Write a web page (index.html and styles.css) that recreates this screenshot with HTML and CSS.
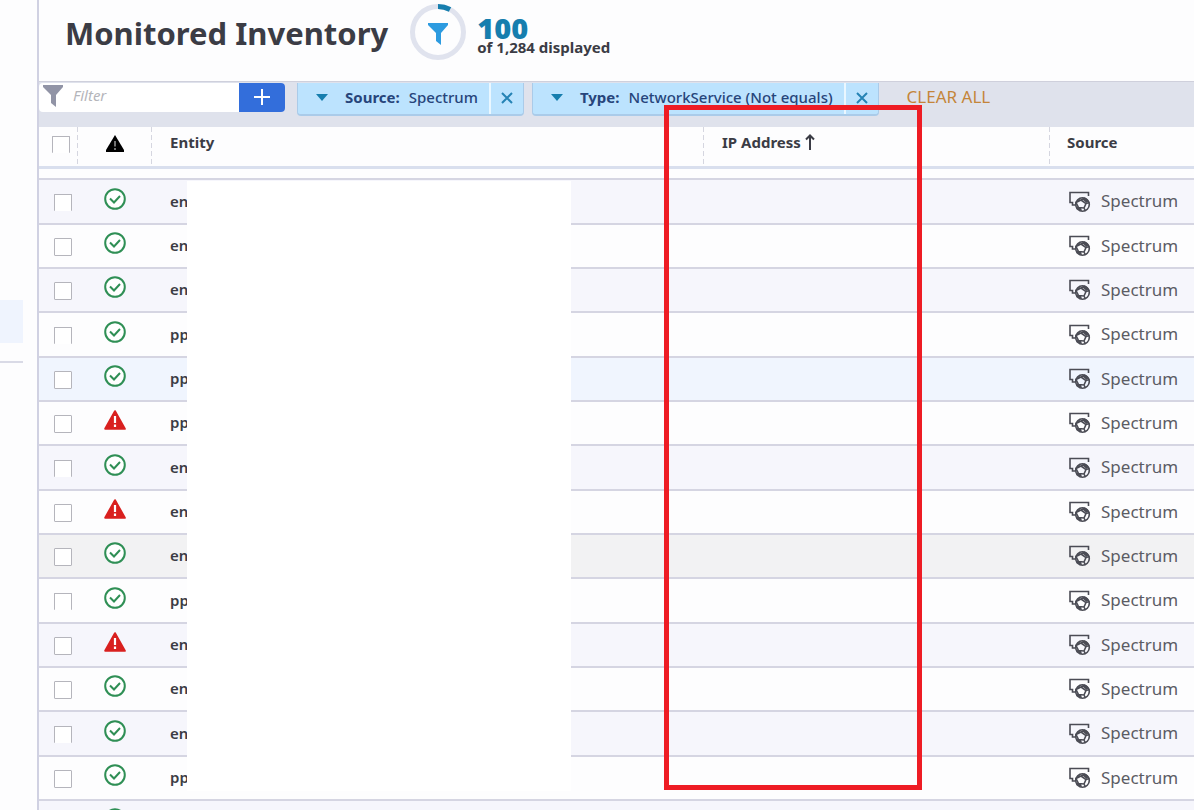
FILE: index.html
```html
<!DOCTYPE html>
<html lang="en">
<head>
    <meta charset="UTF-8">
    <meta name="viewport" content="width=device-width, initial-scale=1.0">
    <title>Monitored Inventory</title>
    <link rel="stylesheet" href="styles.css">
</head>
<body>

    <svg class="defs" aria-hidden="true">
        <symbol id="funnel" viewBox="0 0 20 22">
            <path d="M0 0h20v2l-7 8v12l-5-4v-8L0 2z" fill="currentColor"/>
        </symbol>
        <symbol id="ok" viewBox="0 0 22 22">
            <circle cx="11" cy="11" r="9.8" fill="#fff" stroke="#2f8f55" stroke-width="2"/>
            <path d="M6 10.500l4 4L16 8" fill="none" stroke="#2f8f55" stroke-width="2"/>
        </symbol>
        <symbol id="alert" viewBox="0 0 22 20">
            <path d="M11 1.200L20.800 18.800H1.200z" fill="#d9201f" stroke="#d9201f" stroke-width="2" stroke-linejoin="round"/>
            <path d="M11 6v7M11 14.500v2.500" stroke="#fff" stroke-width="2.200"/>
        </symbol>
        <symbol id="source" viewBox="0 0 24 22">
            <g fill="none" stroke="#4b4c55" stroke-width="1.600">
                <path d="M20.500 5V1.500H2V11.500h2.500v2.500h3"/>
                <circle cx="14.500" cy="13.500" r="6.800"/>
                <path d="M8 11.500l5-2.500 5 3.500-2 4.500-5.500-.5zM13 9l4-2M18 12.500l3.500-1M16 17l1.500 3M10.500 16.500l-2 1.500"/>
            </g>
            <path d="M14 8l4.500 4 2.500-2-3-3zM9 16l4 .5 1 3.500-4-1.500zM8 11l3.500-1.500 1-2.500z" fill="#4b4c55"/>
        </symbol>
    </svg>

    <div class="page">
        <aside class="sidebar">
            <div class="sidebar-active"></div>
            <div class="sidebar-rule"></div>
        </aside>

        <main class="content">
            <header class="header">
                <h1>Monitored Inventory</h1>
                <svg class="ring" viewBox="0 0 56 56" aria-hidden="true">
                    <circle cx="28" cy="28" r="25.500" fill="none" stroke="#e0e3ee" stroke-width="5"/>
                    <path d="M28 2.500A25.500 25.500 0 0 1 40 5.500" fill="none" stroke="#167eae" stroke-width="5"/>
                    <path d="M18 19h20v2l-7 8v12l-5-4v-8l-8-8z" fill="#2d9be0"/>
                </svg>
                <div class="count">
                    <strong>100</strong>
                    <span>of 1,284 displayed</span>
                </div>
            </header>

            <div class="toolbar">
                <div class="search">
                    <svg class="search-icon" aria-hidden="true"><use href="#funnel"/></svg>
                    <input type="text" placeholder="Filter" aria-label="Filter">
                    <button class="add" aria-label="Add filter">
                        <svg viewBox="0 0 16 16"><path d="M8 0v16M0 8h16" stroke="#fff" stroke-width="2"/></svg>
                    </button>
                </div>
                <div class="chip">
                    <button class="chip-label">
                        <svg class="caret" viewBox="0 0 12 7"><path d="M0 0h12L6 7z"/></svg>
                        <b>Source:</b><span>Spectrum</span>
                    </button>
                    <button class="chip-close" aria-label="Remove source filter">
                        <svg viewBox="0 0 10 10"><path d="M0 0l10 10M10 0L0 10"/></svg>
                    </button>
                </div>
                <div class="chip">
                    <button class="chip-label">
                        <svg class="caret" viewBox="0 0 12 7"><path d="M0 0h12L6 7z"/></svg>
                        <b>Type:</b><span>NetworkService (Not equals)</span>
                    </button>
                    <button class="chip-close" aria-label="Remove type filter">
                        <svg viewBox="0 0 10 10"><path d="M0 0l10 10M10 0L0 10"/></svg>
                    </button>
                </div>
                <button class="clear">CLEAR ALL</button>
            </div>

            <div class="inventory">
                <table>
                    <thead>
                        <tr>
                            <th class="col-check"><input type="checkbox" class="cut" aria-label="Select all"></th>
                            <th class="col-status">
                                <svg viewBox="0 0 18 17" role="img" aria-label="Status"><path d="M9 0l9 15v2H0v-2z"/><path d="M9 6v5.500M9 13v2" stroke="#999" stroke-width="1.500"/></svg>
                            </th>
                            <th class="col-entity">Entity</th>
                            <th class="col-ip">IP Address
                                <svg class="sort" viewBox="0 0 10 16"><path d="M5 16V1.500M1 5.500l4-4 4 4"/></svg>
                            </th>
                            <th class="col-source">Source</th>
                        </tr>
                        <tr class="spacer"><td></td><td colspan="4"></td></tr>
                    </thead>
                    <tbody id="rows"></tbody>
                </table>
                <div class="redacted"></div>
            </div>
        </main>

        <div class="highlight"></div>
    </div>

    <script>
        const rows = [
            ["ok", "en"], ["ok", "en"], ["ok", "en"], ["ok", "pp"], ["ok", "pp", "selected"],
            ["alert", "pp"], ["ok", "en"], ["alert", "en"], ["ok", "en", "hovered"], ["ok", "pp"],
            ["alert", "en"], ["ok", "en"], ["ok", "en"], ["ok", "pp"], ["ok", ""]
        ];

        document.getElementById("rows").innerHTML = rows.map(([status, name, state], i) => `
            <tr class="${state || ""}">
                <td class="col-check"><input type="checkbox" class="${i % 3 === 0 ? "cut" : ""}" aria-label="Select row ${i + 1}"></td>
                <td class="col-status"><svg class="${status}"><use href="#${status}"/></svg></td>
                <td class="col-entity">${name}</td>
                <td class="col-ip"></td>
                <td class="col-source">${name ? `<div><svg><use href="#source"/></svg>Spectrum</div>` : ""}</td>
            </tr>`).join("");
    </script>

</body>
</html>
```
FILE: styles.css
```css
* {
    box-sizing: border-box;
}
body {
    margin: 0;
    background-color: #fdfdfe;
    color: #3b3c45;
    font-family: "Noto Sans", "Open Sans", sans-serif;
    font-size: 15px;
}
button {
    border: 0;
    padding: 0;
    background: none;
    font: inherit;
    cursor: pointer;
}
svg {
    display: block;
    flex: none;
}
.defs {
    position: absolute;
    width: 0;
    height: 0;
}
.page {
    position: relative;
    display: flex;
    height: 100vh;
    overflow: hidden;
}

/* Sidebar */
.sidebar {
    flex: none;
    width: 39px;
    padding-top: 300px;
    border-right: 2px solid #d0d1e2;
}
.sidebar-active {
    width: 23px;
    height: 43px;
    background-color: #eff4fe;
}
.sidebar-rule {
    width: 23px;
    height: 2px;
    margin-top: 18px;
    background-color: #d9dae6;
}
.content {
    flex: 1;
    min-width: 0;
}

/* Header */
.header {
    display: flex;
    align-items: center;
    height: 82px;
    padding: 0 26px 17px;
    border-bottom: 1px solid #cfd0dc;
}
h1 {
    margin: 2px 22px 0 0;
    font-size: 31px;
    line-height: 40px;
}
.ring {
    width: 56px;
    height: 56px;
}
.count {
    display: flex;
    flex-direction: column;
    margin: 8px 0 0 11px;
    font-weight: bold;
}
.count strong {
    color: #167eae;
    font-size: 29px;
    line-height: 22px;
}
.count span {
    font-size: 15px;
    line-height: 16px;
}

/* Filter bar */
.toolbar {
    display: flex;
    align-items: flex-start;
    height: 45px;
    padding-top: 1px;
    background-color: #dfe2ec;
}
.search {
    display: flex;
    align-items: center;
    width: 246px;
    height: 29px;
    margin-right: 12px;
    background-color: #fff;
    border-radius: 4px;
}
.search-icon {
    width: 20px;
    height: 22px;
    margin: 0 0 3px 4px;
    color: #9194a6;
}
.search input {
    flex: 1;
    min-width: 0;
    padding: 0 10px 5px;
    border: 0;
    background: none;
    font: italic 15px "Noto Sans", sans-serif;
}
.search input::placeholder {
    color: #b4b5ba;
}
.add {
    display: flex;
    align-items: center;
    justify-content: center;
    width: 46px;
    height: 29px;
    padding-bottom: 2px;
    background-color: #336edb;
    border-radius: 0 4px 4px 0;
}
.add svg {
    width: 16px;
    height: 16px;
}
.chip {
    display: flex;
    height: 33px;
    margin-right: 8px;
    background-color: #bce3fe;
    border: 1px solid #aacbe9;
    border-width: 0 1px 2px;
    border-radius: 0 0 4px 4px;
    color: #27457b;
}
.chip-label {
    display: flex;
    align-items: center;
    padding: 0 11px 4px 18px;
    color: #27457b;
    font-weight: 500;
}
.caret {
    width: 12px;
    height: 7px;
    margin: 2px 17px 0 0;
    fill: #167eae;
}
.chip b {
    margin-right: 9px;
}
.chip-close {
    display: flex;
    align-items: center;
    justify-content: center;
    width: 34px;
    padding-bottom: 1px;
    border-left: 2px solid #eaf7ff;
}
.chip-close svg {
    width: 10px;
    height: 10px;
    overflow: visible;
    stroke: #2583b5;
    stroke-width: 2;
}
.clear {
    margin-left: 20px;
    color: #c4853a;
    font-size: 17px;
    line-height: 28px;
}

/* Table */
.inventory {
    position: relative;
}
table {
    width: 100%;
    border-collapse: separate;
    border-spacing: 0;
    table-layout: fixed;
}
th, td {
    padding: 0;
    text-align: left;
}
th {
    height: 42px;
    padding-bottom: 9px;
    border-bottom: 3px solid #d9dfee;
    background: linear-gradient(#d5d6e0 60%, transparent 60%) left top / 1px 8px repeat-y;
}
.col-check {
    width: 38px;
    padding-left: 15px;
}
th.col-check {
    padding-left: 13px;
    background: none;
}
th.col-entity, th.col-ip {
    padding-left: 19px;
}
th.col-source {
    padding-left: 18px;
}
.col-status {
    width: 74px;
    padding-left: 2px;
}
.col-ip {
    width: 346px;
}
.col-source {
    width: 145px;
}
th.col-status svg {
    width: 18px;
    height: 17px;
    margin: 2px auto 0;
}
.sort {
    display: inline-block;
    width: 10px;
    height: 16px;
    vertical-align: -2px;
    fill: none;
    stroke: #3b3c45;
    stroke-width: 2;
}
.spacer td {
    height: 11px;
    border-bottom: 2px solid #d5d5e2;
}
tbody td {
    height: 44px;
    padding-bottom: 2px;
    border-bottom: 2px solid #d5d5e2;
}
tbody tr:nth-child(3n + 1) td {
    height: 45px;
}
tbody tr:nth-child(odd) {
    background-color: #f6f6fc;
}
tbody tr.selected {
    background-color: #f0f5fe;
}
tbody tr.hovered {
    background-color: #f2f2f3;
}
input[type="checkbox"] {
    appearance: none;
    display: block;
    width: 18px;
    height: 18px;
    margin: 0;
    border: 1px solid #b5b5bc;
    border-radius: 1px;
    background-color: #fff;
}
input[type="checkbox"].cut {
    height: 17px;
    border-bottom: 0;
}
th input[type="checkbox"] {
    margin-top: 4px;
}
tbody .col-check {
    padding-top: 3px;
}
tbody .col-status {
    padding-bottom: 6px;
}
tbody .col-status svg {
    width: 22px;
    height: 22px;
    margin: 0 auto;
}
tbody .col-entity {
    padding-left: 19px;
    font-weight: 600;
}
tbody .col-source {
    padding-left: 19px;
    font-size: 17px;
    color: #5b5c64;
}
.col-source div {
    display: flex;
    align-items: center;
}
.col-source svg {
    width: 24px;
    height: 22px;
    margin: 2px 9px 0 0;
}

/* Mask over the entity names */
.redacted {
    position: absolute;
    top: 54px;
    left: 148px;
    width: 384px;
    height: 610px;
    background-color: #fff;
}

/* Callout around the IP Address column */
.highlight {
    position: absolute;
    top: 105px;
    right: 272px;
    width: 258px;
    height: 685px;
    border: 5px solid #ee1c24;
    pointer-events: none;
}
```
